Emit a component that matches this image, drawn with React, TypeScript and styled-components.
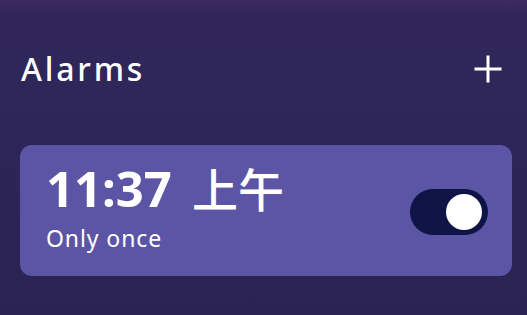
import React from "react";
import styled, { createGlobalStyle } from "styled-components";

const Global = createGlobalStyle`
  html, body { margin: 0; padding: 0; }
  body {
    width: 527px;
    height: 315px;
    overflow: hidden;
    font-family: "Noto Sans", "Noto Sans CJK SC", sans-serif;
    background: #2d2556;
  }
`;

const Screen = styled.div`
  width: 527px;
  height: 315px;
  box-sizing: border-box;
  display: flex;
  flex-direction: column;
  background: linear-gradient(180deg, #3d2a60 0px, #32265c 14px, #2f265a 60px, #2b2352 315px);
`;

const Header = styled.header`
  display: flex;
  align-items: center;
  justify-content: space-between;
  height: 30px;
  margin-top: 54px;
  padding: 0 24px 0 21px;
`;

const Title = styled.h1`
  margin: 0;
  color: #ffffff;
  font-size: 32px;
  font-weight: 500;
  letter-spacing: 2.8px;
  line-height: 30px;
`;

const AddButton = styled.button`
  width: 30px;
  height: 30px;
  padding: 0;
  border: none;
  background: transparent;
  display: flex;
  align-items: center;
  justify-content: center;
  cursor: pointer;
`;

const List = styled.div`
  padding: 61px 15px 0 20px;
`;

const Card = styled.div`
  height: 131px;
  box-sizing: border-box;
  border-radius: 12px;
  background: #5c55a6;
  display: flex;
  align-items: center;
  justify-content: space-between;
  padding: 0 24px 0 26px;
`;

const Info = styled.div`
  display: flex;
  flex-direction: column;
  gap: 15px;
  margin-top: -7px;
`;

const Time = styled.div`
  display: flex;
  align-items: baseline;
  color: #ffffff;
  font-size: 49px;
  font-weight: 700;
  line-height: 46px;
  white-space: nowrap;
`;

const Period = styled.span`
  font-family: "Noto Sans CJK SC", sans-serif;
  font-weight: 500;
  font-size: 46px;
  margin-left: 20px;
  line-height: 46px;
`;

const Repeat = styled.div`
  color: #ffffff;
  font-size: 23px;
  font-weight: 400;
  letter-spacing: 0.9px;
  line-height: 24px;
`;

const Track = styled.div<{ $on: boolean }>`
  width: 78px;
  height: 46px;
  border-radius: 23px;
  background: ${(p) => (p.$on ? "#0e1446" : "#8882c0")};
  display: flex;
  align-items: center;
  justify-content: ${(p) => (p.$on ? "flex-end" : "flex-start")};
  padding: 0 6px;
  box-sizing: border-box;
  margin-top: 3px;
`;

const Knob = styled.div`
  width: 36px;
  height: 36px;
  border-radius: 50%;
  background: #ffffff;
`;

export default function App() {
  return (
    <>
      <Global />
      <Screen>
        <Header>
          <Title>Alarms</Title>
          <AddButton aria-label="Add alarm">
            <svg width="30" height="30" viewBox="0 0 30 30">
              <path d="M15 1.5V28.5M1.5 15H28.5" stroke="#fff" strokeWidth="3" />
            </svg>
          </AddButton>
        </Header>
        <List>
          <Card>
            <Info>
              <Time>
                11:37<Period>上午</Period>
              </Time>
              <Repeat>Only once</Repeat>
            </Info>
            <Track $on>
              <Knob />
            </Track>
          </Card>
        </List>
      </Screen>
    </>
  );
}
